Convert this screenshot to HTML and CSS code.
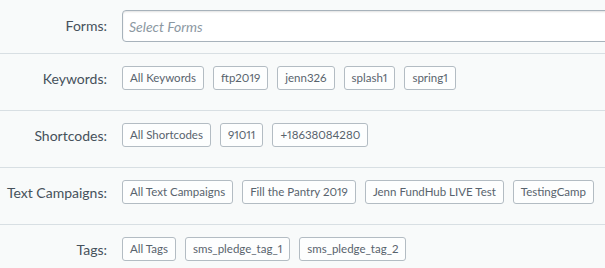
FILE: index.html
```html
<!DOCTYPE html>
<html lang="en">
<head>
    <meta charset="UTF-8">
    <meta name="viewport" content="width=device-width, initial-scale=1.0">
    <title>Filters</title>
    <link rel="stylesheet" href="styles.css">
</head>
<body>
    <div class="filters">
        <div class="filter-row forms-row">
            <label class="filter-label" for="forms">Forms:</label>
            <div class="filter-body">
                <input type="text" id="forms" class="forms-input" placeholder="Select Forms">
            </div>
        </div>

        <div class="filter-row">
            <div class="filter-label">Keywords:</div>
            <div class="filter-body chips">
                <button class="chip">All Keywords</button>
                <button class="chip">ftp2019</button>
                <button class="chip">jenn326</button>
                <button class="chip">splash1</button>
                <button class="chip">spring1</button>
            </div>
        </div>

        <div class="filter-row">
            <div class="filter-label">Shortcodes:</div>
            <div class="filter-body chips">
                <button class="chip">All Shortcodes</button>
                <button class="chip">91011</button>
                <button class="chip">+18638084280</button>
            </div>
        </div>

        <div class="filter-row">
            <div class="filter-label">Text Campaigns:</div>
            <div class="filter-body chips">
                <button class="chip">All Text Campaigns</button>
                <button class="chip">Fill the Pantry 2019</button>
                <button class="chip">Jenn FundHub LIVE Test</button>
                <button class="chip">TestingCamp</button>
            </div>
        </div>

        <div class="filter-row">
            <div class="filter-label">Tags:</div>
            <div class="filter-body chips">
                <button class="chip">All Tags</button>
                <button class="chip">sms_pledge_tag_1</button>
                <button class="chip">sms_pledge_tag_2</button>
            </div>
        </div>
    </div>
</body>
</html>
```

FILE: styles.css
```css
html, body {
    overflow: hidden;
}

body {
    margin: 0;
    background-color: #f8fafa;
    font-family: Lato, "Open Sans", sans-serif;
    color: #434e58;
}

.filter-row {
    display: flex;
    align-items: flex-start;
    padding: 12px 0 12px;
    border-bottom: 1px solid #d8dfe3;
}

.forms-row {
    padding: 10px 0 11px;
}

.filter-label {
    flex: 0 0 107px;
    text-align: right;
    font-size: 14px;
    line-height: 24px;
    padding-top: 1px;
    color: #46515b;
}

.forms-row .filter-label {
    line-height: 30px;
}

.filter-body {
    margin-left: 15px;
    flex: 1;
}

.forms-input {
    box-sizing: border-box;
    width: 520px;
    height: 32px;
    padding: 0 6px;
    border: 1px solid #a7b2bb;
    border-radius: 4px;
    background: #fff;
    box-shadow: inset 0 1px 2px rgba(0, 0, 0, 0.12);
    font-family: Lato, "Open Sans", sans-serif;
    font-size: 14px;
    color: #434e58;
}

.forms-input::placeholder {
    color: #8c98a2;
    font-style: italic;
}

.chips {
    display: flex;
    flex-wrap: wrap;
    column-gap: 9px;
}

.chip {
    box-sizing: border-box;
    height: 24px;
    margin-bottom: 8px;
    padding: 0 7px;
    border: 1px solid #b3bcc3;
    border-radius: 3px;
    background: #fdfefe;
    font-family: Lato, "Open Sans", sans-serif;
    font-size: 11.5px;
    font-variant-numeric: proportional-nums;
    line-height: 22px;
    color: #58636d;
    cursor: pointer;
}
```
